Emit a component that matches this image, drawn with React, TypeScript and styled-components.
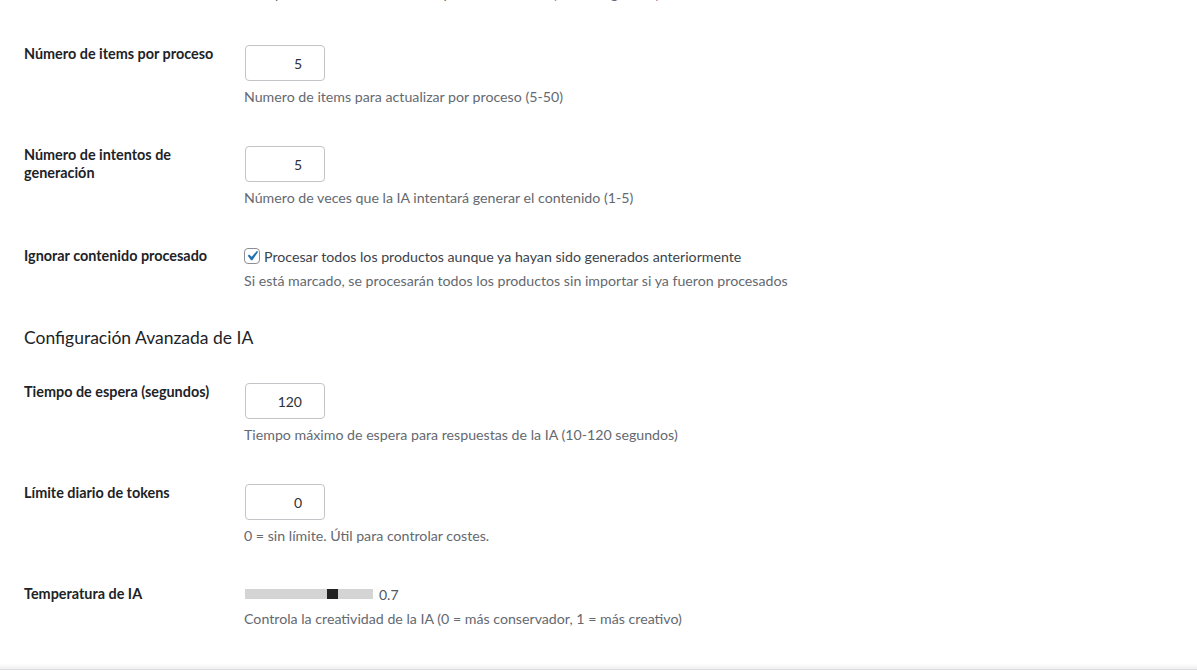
import React from "react";
import styled, {createGlobalStyle} from "styled-components";

const GlobalStyle = createGlobalStyle`
  html, body {
    margin: 0;
    padding: 0;
    background: #f0f0f1;
  }
  body {
    font-family: Lato, "Noto Sans", sans-serif;
    color: #3c434a;
  }
  * {
    box-sizing: border-box;
  }
`

const Page = styled.div`
  display: flex;
  flex-direction: column;
  height: 100vh;
`

const Content = styled.div`
  flex: 1;
  overflow: hidden;
  background: #ffffff;
  padding: 0 24px;
`

const Form = styled.div`
  display: flex;
  flex-direction: column;
  margin-top: -73px;
`

const Row = styled.div`
  display: flex;
  align-items: flex-start;
`

const Label = styled.div`
  flex: 0 0 210px;
  padding: 15px 10px 25px 0;
  font-size: 14.4px;
  font-weight: 700;
  line-height: 18px;
  color: #1d2327;
`

const Field = styled.div<{$tail?: number}>`
  flex: 1;
  padding: 15px 10px ${p => p.$tail ?? 25}px;
`

const NumberInput = styled.input`
  display: block;
  width: 80px;
  height: 36px;
  margin: 0 0 0 1px;
  padding: 0 22px 0 8px;
  border: 1px solid #c3c4c7;
  border-radius: 4px;
  background: #fff;
  font-family: inherit;
  font-size: 14px;
  color: #2c3338;
  text-align: right;
  outline: none;
`

const Description = styled.p`
  margin: 7px 0 0;
  font-size: 14.2px;
  line-height: 18px;
  color: #646970;
  white-space: nowrap;
`

const CheckLabel = styled.label`
  display: flex;
  align-items: center;
  gap: 4px;
  height: 18px;
  font-size: 14.2px;
  color: #3c434a;
  white-space: nowrap;
`

const CheckBox = styled.span`
  display: inline-flex;
  align-items: center;
  justify-content: center;
  flex: 0 0 16px;
  width: 16px;
  height: 16px;
  border: 1px solid #8c8f94;
  border-radius: 4px;
  background: #fff;

  svg {
    margin: -3px;
  }
`

const SectionTitle = styled.h2`
  margin: 11px 0 18px;
  font-size: 17.5px;
  font-weight: 400;
  line-height: 24px;
  color: #1d2327;
`

const SliderRow = styled.div`
  display: flex;
  align-items: center;
  gap: 6px;
  height: 18px;
`

const Track = styled.div`
  position: relative;
  width: 128px;
  height: 10px;
  margin-left: 1px;
  background: #d4d4d4;
`

const Thumb = styled.span`
  position: absolute;
  top: 0;
  width: 11px;
  height: 10px;
  background: #222;
`

const SliderValue = styled.span`
  font-size: 14px;
  color: #50575e;
`

const Footer = styled.div`
  flex: 0 0 7px;
  background: linear-gradient(to bottom, #ffffff, #f0f0f1);
  border-bottom: 1px solid #dcdcde;
`

function NumberRow({label, value, help, tail}: {label: string; value: string; help: string; tail?: number}) {
  return (
    <Row>
      <Label>{label}</Label>
      <Field $tail={tail}>
        <NumberInput type="text" defaultValue={value} />
        <Description>{help}</Description>
      </Field>
    </Row>
  )
}

function Slider({value}: {value: number}) {
  const left = Math.round(value * (128 - 11))
  return (
    <SliderRow>
      <Track>
        <Thumb style={{left}} />
      </Track>
      <SliderValue>{value}</SliderValue>
    </SliderRow>
  )
}

export default function App() {
  return (
    <Page>
      <GlobalStyle />
      <Content>
        <Form>
          <NumberRow
            label="Pausa entre procesos"
            value="1000"
            help="Tiempo de descanso entre cada proceso de items (en milisegundos)"
            tail={27}
          />
          <NumberRow
            label="Número de items por proceso"
            value="5"
            help="Numero de items para actualizar por proceso (5-50)"
          />
          <NumberRow
            label="Número de intentos de generación"
            value="5"
            help="Número de veces que la IA intentará generar el contenido (1-5)"
          />
          <Row>
            <Label>Ignorar contenido procesado</Label>
            <Field>
              <CheckLabel>
                <CheckBox>
                  <svg width="20" height="20" viewBox="0 0 20 20">
                    <path d="M14.83 4.89l1.34.94-5.81 8.38H9.02L5.78 9.67l1.34-1.25 2.57 2.4z" fill="#2271b1" />
                  </svg>
                </CheckBox>
                Procesar todos los productos aunque ya hayan sido generados anteriormente
              </CheckLabel>
              <Description>Si está marcado, se procesarán todos los productos sin importar si ya fueron procesados</Description>
            </Field>
          </Row>

          <SectionTitle>Configuración Avanzada de IA</SectionTitle>

          <NumberRow
            label="Tiempo de espera (segundos)"
            value="120"
            help="Tiempo máximo de espera para respuestas de la IA (10-120 segundos)"
          />
          <NumberRow
            label="Límite diario de tokens"
            value="0"
            help="0 = sin límite. Útil para controlar costes."
          />
          <Row>
            <Label>Temperatura de IA</Label>
            <Field>
              <Slider value={0.7} />
              <Description>Controla la creatividad de la IA (0 = más conservador, 1 = más creativo)</Description>
            </Field>
          </Row>
        </Form>
      </Content>
      <Footer />
    </Page>
  )
}
